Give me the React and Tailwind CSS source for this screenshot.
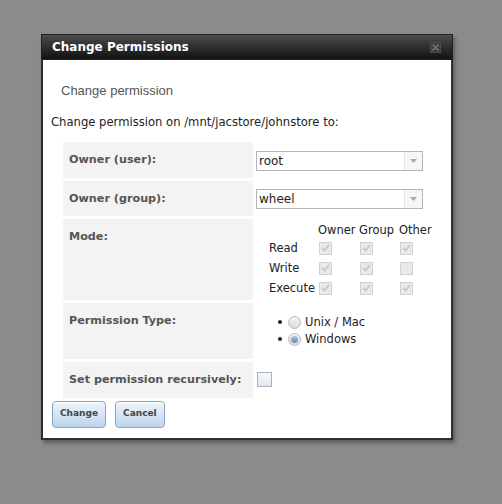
import React, { useState } from 'react'

const verdana = { fontFamily: '"DejaVu Sans", Verdana, sans-serif' }

const Select = ({ value }) => (
  <div className="flex h-[20px] w-[167px] border border-[#b5b5b5] bg-white">
    <span className="flex-1 pl-[2px] text-[12px] leading-[18px] text-[#222]">{value}</span>
    <span className="flex w-[18px] items-center justify-center border-l border-[#e2e2e2] bg-[#f6f6f6]">
      <svg width="7" height="4" viewBox="0 0 7 4"><path d="M0 0h7L3.5 4z" fill="#a9a9a9" /></svg>
    </span>
  </div>
)

const Check = ({ on }) => (
  <span className="flex h-[13px] w-[13px] items-center justify-center border border-[#d2d2d2] bg-[#e9e9e9]">
    {on && (
      <svg width="9" height="8" viewBox="0 0 9 8">
        <path d="M1 4l2.5 2.5L8 1" stroke="#c4c4c4" strokeWidth="1.6" fill="none" />
      </svg>
    )}
  </span>
)

const Radio = ({ on }) => (
  <span className="flex h-[13px] w-[13px] items-center justify-center rounded-full border border-[#b9b9b9] bg-gradient-to-b from-[#f4f4f4] to-[#dcdcdc]">
    {on && <span className="h-[7px] w-[7px] rounded-full bg-gradient-to-b from-[#a9c8e4] to-[#5f8fbd]" />}
  </span>
)

const Label = ({ children, h }) => (
  <div className={`w-[190px] bg-[#f3f3f3] pl-[6px] pt-[11px] text-[11.2px] font-bold leading-[14px] text-[#555] ${h}`}>
    {children}
  </div>
)

const modes = [
  ['Read', [true, true, true]],
  ['Write', [true, true, false]],
  ['Execute', [true, true, true]],
]

export default function App() {
  const [perm, setPerm] = useState('windows')

  return (
    <div className="h-[504px] w-[502px] bg-[#8b8b8b] pl-[41px] pt-[34px]" style={verdana}>
      <div className="w-[412px] border-2 border-t-0 border-[#2e2e2e] bg-white shadow-[2px_3px_4px_rgba(0,0,0,0.35)]">
        {/* title bar */}
        <div className="-mx-[2px] flex h-[26px] items-center justify-between border border-[#222] bg-gradient-to-b from-[#4c4c4c] to-[#131313] pl-[10px] pr-[11px]">
          <span className="text-[12px] font-bold text-white">Change Permissions</span>
          <svg width="11" height="11" viewBox="0 0 11 11">
            <rect x="0.5" y="0.5" width="10" height="10" fill="#3c3c44" stroke="#4a4a52" />
            <path d="M2.5 2.5l6 6M8.5 2.5l-6 6" stroke="#74747f" strokeWidth="1.6" />
          </svg>
        </div>

        <div className="px-[8px] pb-[10px]">
          <p className="pl-[10px] pt-[21px] text-[13px] text-[#555]" style={{ fontFamily: '"Liberation Sans", Arial, sans-serif' }}>
            Change permission
          </p>
          <p className="mt-[14px] text-[11.6px] leading-[14px] text-[#222]">
            Change permission on /mnt/jacstore/johnstore to:
          </p>

          <div className="ml-[12px] mt-[13px] flex flex-col gap-[3px]">
            <div className="flex gap-[3px]">
              <Label h="h-[36px]">Owner (user):</Label>
              <div className="pt-[9px]"><Select value="root" /></div>
            </div>
            <div className="flex gap-[3px]">
              <Label h="h-[35px]">Owner (group):</Label>
              <div className="pt-[8px]"><Select value="wheel" /></div>
            </div>
            <div className="flex gap-[3px]">
              <Label h="h-[81px]">Mode:</Label>
              <div className="pl-[13px] pt-[5px] text-[11.5px] text-[#222]">
                <div className="grid grid-cols-[49px_41px_40px_auto] items-center gap-y-[7px]">
                  <span className="-mb-[2px]" />
                  <span className="-mb-[2px] leading-[13px]">Owner</span>
                  <span className="-mb-[2px] leading-[13px]">Group</span>
                  <span className="-mb-[2px] leading-[13px]">Other</span>
                  {modes.map(([name, cells]) =>
                    <React.Fragment key={name}>
                      <span className="leading-[13px]">{name}</span>
                      {cells.map((c, i) => (
                        <span key={i} className="pl-[1px]"><Check on={c} /></span>
                      ))}
                    </React.Fragment>
                  )}
                </div>
              </div>
            </div>
            <div className="flex gap-[3px]">
              <Label h="h-[56px]">Permission Type:</Label>
              <ul className="flex flex-col gap-[4px] pl-[22px] pt-[13px] text-[11.5px] leading-[13px] text-[#222]">
                {[['unix', 'Unix / Mac'], ['windows', 'Windows']].map(([k, t]) => (
                  <li key={k} className="flex items-center cursor-pointer" onClick={() => setPerm(k)}>
                    <span className="mr-[6px] h-[4px] w-[4px] rounded-full bg-[#222]" />
                    <Radio on={perm === k} />
                    <span className="ml-[4px]">{t}</span>
                  </li>
                ))}
              </ul>
            </div>
            <div className="flex gap-[3px]">
              <Label h="h-[36px]">Set permission recursively:</Label>
              <div className="pl-[1px] pt-[10px]">
                <span className="block h-[15px] w-[15px] border border-[#a8b4c0] bg-gradient-to-b from-[#f8f8f8] to-[#e4e8ec]" />
              </div>
            </div>
          </div>

          <div className="mt-[3px] flex gap-[9px] pl-[1px]">
            {['Change', 'Cancel'].map((b) => (
              <button
                key={b}
                className="h-[27px] rounded-[4px] border border-[#8aa4bf] bg-gradient-to-b from-[#eef5fc] to-[#bcd4ec] px-[7px] text-[9px] font-bold text-[#444] shadow-[inset_0_1px_0_#fff]"
              >
                {b}
              </button>
            ))}
          </div>
        </div>
      </div>
    </div>
  )
}
